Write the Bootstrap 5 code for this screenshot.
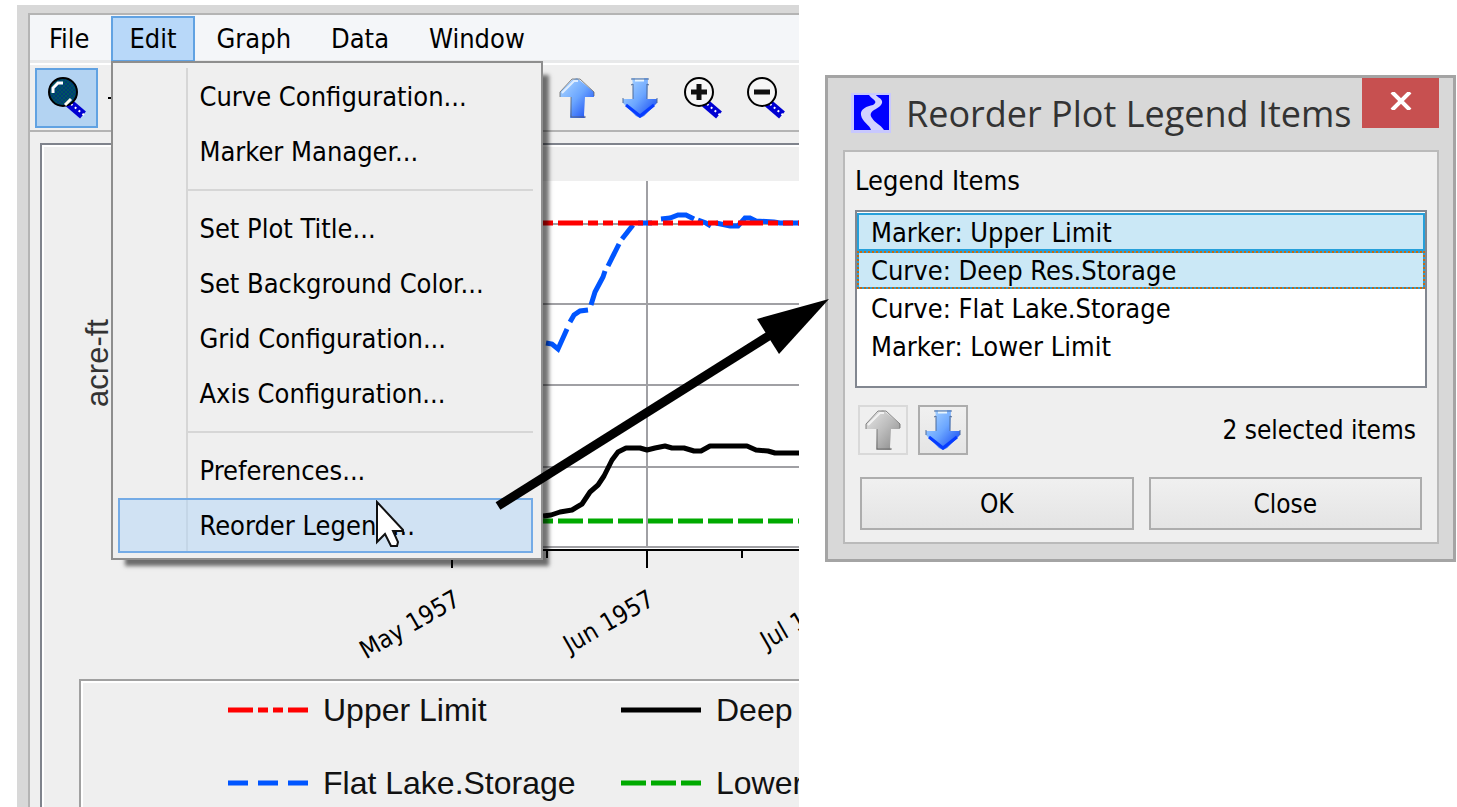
<!DOCTYPE html>
<html lang="en">
<head>
<meta charset="utf-8">
<meta name="viewport" content="width=device-width, initial-scale=1">
<title>Reorder Plot Legend Items</title>
<link href="https://cdn.jsdelivr.net/npm/bootstrap@5.3.0/dist/css/bootstrap.min.css" rel="stylesheet">
<style>
  :root { --ui: "DejaVu Sans Condensed", "DejaVu Sans", sans-serif; --face: #efefef; --frame: #d8d8d8; --line: #b4b4b4; }
  body { font: 27px/32px var(--ui); color: #000; background: #fff; }
  .stage { display: grid; grid-template-columns: minmax(0, 782fr) minmax(0, 631fr); min-height: 100vh; padding: 5px 1px 0 17px; gap: 26px; overflow: hidden; }
  .plot-window { height: calc(100vh - 5px); padding: 8px 0 0 11px; background: var(--frame); overflow: hidden; }
  .plot-inner { border: solid var(--line); border-width: 2px 0 0 2px; background: var(--face); min-height: 100%; }
  .menu-strip { height: 50px; background: #f4f6f9; border-bottom: 2px solid #fff; padding-left: 1px; gap: 4px; box-shadow: inset 0 -3px #e8e9ea; }
  .menu-btn { height: 46px; margin-top: 1px; padding: 0 16px; border: 2px solid transparent; border-radius: 0; background: none; color: #000; }
  .menu-btn.open { background: #b8d8f9; border-color: #61a2e2; }
  .menu-pop { position: absolute; z-index: 5; top: 46px; left: 0; width: 432px; padding: 6px 8px 5px 5px; background: var(--face) linear-gradient(#d6d6d6, #d6d6d6) 73px 5px / 2px calc(100% - 10px) no-repeat; border: 2px solid #8e8e8e; box-shadow: 10px 10px 4px -4px rgba(0,0,0,.55); }
  .menu-entry { display: block; width: 100%; height: 55px; padding: 0 0 0 79px; border: 2px solid transparent; border-radius: 0; background: none; text-align: left; color: #000; }
  .menu-entry.hot { background: rgba(178,214,248,.5); border-color: #74abe6; }
  .menu-sep { height: 2px; margin: 10px 0 10px 70px; border: 0; background: #d6d6d6; opacity: 1; }
  .tool-strip { height: 67px; padding: 3px 0 2px 5px; border-bottom: 2px solid var(--line); }
  .tool-btn { flex: none; width: 63px; height: 60px; padding: 0; border: 2px solid transparent; border-radius: 0; background: none; }
  .tool-btn svg { vertical-align: middle; }
  .tool-btn.on { background: #b3d3f2; border-color: #61a2e2; }
  .tool-gap { width: 384px; }
  .plot-frame { margin: 11px 0 0 10px; border: solid #7f838c; border-width: 2px 0 0 2px; box-shadow: inset 2px 2px #fff; padding: 2px 0 0 2px; }
  .legend-box { margin-left: 35px; height: 140px; border: solid #a0a0a0; border-width: 2px 0 0 2px; box-shadow: inset 2px 2px #fff; padding: 9px 0 0 147px; display: grid; grid-template-columns: 378px 378px; grid-template-rows: 40px 40px; gap: 33px 15px; font: 32px/40px "Liberation Sans", sans-serif; color: #111; }
  .legend-box > div { gap: 15px; }
  .legend-box svg { flex: none; }
  .dlg { margin-top: 70px; background: var(--frame); border: 3px solid #a4a4a4; padding: 0 14px 15px 15px; }
  .dlg-head { height: 72px; padding-left: 8px; }
  .dlg-head > svg { margin-top: 15px; }
  .dlg-title { font: 36px/48px "Open Sans", sans-serif; color: #333; padding-top: 12px; margin-left: 15px; white-space: nowrap; }
  .close-x { width: 77px; height: 50px; border: 0; border-radius: 0; padding: 0 0 4px; background: #c75050; }
  .dlg-panel { background: var(--face); border: 2px solid #bababa; padding: 13px 10px 12px; }
  .list-frame { height: 178px; margin: 13px 0 17px; background: #fff; border: 2px solid #828790; padding: 1px 0 0; border-radius: 0; list-style: none; }
  .list-row { height: 38px; padding: 1px 12px; line-height: 34px; border: 2px solid transparent; }
  .list-row.picked { background: #cbe8f6; border-color: #26a0da; }
  .list-row.focused { outline: 2px dotted #c86810; outline-offset: -2px; }
  .tools-row { padding: 0 11px 0 3px; gap: 10px; margin-bottom: 22px; font-size: 26px; }
  .arrow-btn { width: 50px; height: 50px; padding: 0; border: 2px solid #adadad; border-radius: 0; background: linear-gradient(#f0f0f0, #e5e5e5); }
  .arrow-btn svg { display: block; margin: auto; }
  .arrow-btn:disabled { border-color: #d9d9d9; background: var(--face); }
  .answer-row { padding: 0 5px; gap: 15px; }
  .dlg-btn { height: 53px; padding: 0; border: 2px solid #adadad; border-radius: 0; background: linear-gradient(#f0f0f0, #e4e4e4); font-size: 26px; color: #000; }
  .pointer { position: absolute; z-index: 6; left: 376px; top: 500px; }
  .callout { position: absolute; z-index: 7; left: 490px; top: 290px; pointer-events: none; }
</style>
</head>
<body>
<svg width="0" height="0" class="position-absolute" aria-hidden="true">
  <defs>
    <linearGradient id="blueUp" x1="0" y1="0" x2="1" y2="1"><stop offset="0" stop-color="#b4dcff"/><stop offset=".5" stop-color="#6ba6ff"/><stop offset="1" stop-color="#0b3cf0"/></linearGradient>
    <linearGradient id="greyUp" x1="0" y1="0" x2="1" y2="1"><stop offset="0" stop-color="#e8e8e8"/><stop offset=".5" stop-color="#bcbcbc"/><stop offset="1" stop-color="#858585"/></linearGradient>
    <pattern id="lensDots" width="4" height="4" patternUnits="userSpaceOnUse"><rect width="4" height="4" fill="#003a78"/><path d="M0 0h2v2h-2zM2 2h2v2h-2z" fill="#00555e"/></pattern>
    <symbol id="up" viewBox="0 0 36 42"><path d="M18 1 35 15v5h-9l-1 18 1 3H11l1-21H1v-5L13 3z"/><path d="M3 16 15 4h4" fill="none" stroke="#fff" stroke-width="2" opacity=".7"/><path d="M1 20v-5L13 2h8L35 15v4M12 20v20h15" fill="none" stroke="#555" stroke-width="1" opacity=".7"/></symbol>
    <symbol id="down" viewBox="0 0 36 42"><path d="M10 1h16l-1 21h10v4L22 39l-4 2-4-2L1 26v-4h10V8z" fill="url(#blueUp)"/><path d="M13 3h9" stroke="#e8f6ff" stroke-width="3"/><path d="M9 2h18M9 8l2-1v15M27 8l-2-1v15M1 21v5M35 21v5" fill="none" stroke="#4d6b99" stroke-width="1"/><path d="M4 28 18 39 32 28" fill="none" stroke="#073cff" stroke-width="3"/></symbol>
    <symbol id="handle" viewBox="0 0 40 42"><path d="M22 26 36 38" stroke="#0000d2" stroke-width="9"/><path d="M24 27 37 38" stroke="#fff" stroke-width="2" stroke-dasharray="2 3"/></symbol>
  </defs>
</svg>

<main class="stage position-relative align-items-start">
  <section class="plot-window" aria-label="Plot window">
    <div class="plot-inner">
      <nav class="menu-strip d-flex align-items-start" aria-label="Menu bar">
        <button type="button" class="menu-btn">File</button>
        <div class="position-relative">
          <button type="button" class="menu-btn open" aria-expanded="true">Edit</button>
          <div class="menu-pop" role="menu">
            <button type="button" class="menu-entry" role="menuitem">Curve Configuration...</button>
            <button type="button" class="menu-entry" role="menuitem">Marker Manager...</button>
            <hr class="menu-sep">
            <button type="button" class="menu-entry" role="menuitem">Set Plot Title...</button>
            <button type="button" class="menu-entry" role="menuitem">Set Background Color...</button>
            <button type="button" class="menu-entry" role="menuitem">Grid Configuration...</button>
            <button type="button" class="menu-entry" role="menuitem">Axis Configuration...</button>
            <hr class="menu-sep">
            <button type="button" class="menu-entry" role="menuitem">Preferences...</button>
            <button type="button" class="menu-entry hot" role="menuitem">Reorder Legend...</button>
          </div>
        </div>
        <button type="button" class="menu-btn">Graph</button>
        <button type="button" class="menu-btn">Data</button>
        <button type="button" class="menu-btn">Window</button>
      </nav>

      <div class="tool-strip d-flex" role="toolbar" aria-label="Plot tools">
        <button type="button" class="tool-btn on" aria-label="Zoom">
          <svg width="40" height="42" viewBox="0 0 40 42"><use href="#handle"/><circle cx="16" cy="15" r="14" fill="url(#lensDots)" stroke="#000" stroke-width="2"/><path d="M6 16v-5l5-5h5" fill="none" stroke="#fff" stroke-width="3"/><path d="m18 28 6-6" stroke="#ffe" stroke-width="3"/></svg>
        </button>
        <button type="button" class="tool-btn" aria-label="Pan">
          <svg width="44" height="44" viewBox="0 0 44 44"><path d="M0 22h44M22 0v44" stroke="#000" stroke-width="2"/></svg>
        </button>
        <span class="tool-gap flex-shrink-0"></span>
        <button type="button" class="tool-btn" aria-label="Move up"><svg width="36" height="42" fill="url(#blueUp)"><use href="#up"/></svg></button>
        <button type="button" class="tool-btn" aria-label="Move down"><svg width="36" height="42"><use href="#down"/></svg></button>
        <button type="button" class="tool-btn" aria-label="Zoom in">
          <svg width="40" height="42" viewBox="0 0 40 42"><use href="#handle"/><circle cx="16" cy="15" r="14" fill="#f6f6f6" stroke="#000" stroke-width="2"/><path d="M8 15h16M16 7v16" stroke="#111" stroke-width="5"/></svg>
        </button>
        <button type="button" class="tool-btn" aria-label="Zoom out">
          <svg width="40" height="42" viewBox="0 0 40 42"><use href="#handle"/><circle cx="16" cy="15" r="14" fill="#f6f6f6" stroke="#000" stroke-width="2"/><path d="M8 15h16" stroke="#111" stroke-width="5"/></svg>
        </button>
      </div>

      <div class="plot-frame">
        <svg class="d-block" width="755" height="532" viewBox="44 147 755 532" role="img" aria-label="Reservoir storage in acre-feet by month">
          <rect x="190" y="181" width="620" height="368" fill="#fff"/>
          <g stroke="#a0a0a4" stroke-width="2">
            <path d="M190 224H810M190 304H810M190 385H810M190 467H810M190 547H810"/><path d="M647 181V548"/>
          </g>
          <path d="M190 550H810" stroke="#000" stroke-width="2"/>
          <path d="M452 550v18M647 550v18M547 550v8M742 550v8" stroke="#000" stroke-width="2"/>
          <path d="M498 521H799" stroke="#00aa00" stroke-width="5" stroke-dasharray="25 5"/>
          <path d="M543 516 551 515 560 512 572 510 582 504 590 492 598 485 604 476 612 460 618 452 626 448H640L647 450 655 448 665 446 672 448H684L694 451H701L710 446H747L756 450 768 451 775 453H799" fill="none" stroke="#000" stroke-width="5" stroke-linejoin="round"/>
          <g fill="none" stroke="#0055ff" stroke-width="5">
            <path d="M546 343 552 344 558 349 567 329"/>
            <path d="M570 322 574 315 580 311 588 310"/>
            <path d="M591 305 595 292 603 277 605 271"/>
            <path d="M608 266 619 244"/>
            <path d="M622 239 633 225"/>
            <path d="M638 223H652"/>
            <path d="M661 219 670 218 678 215H686L694 219"/>
            <path d="M698 220 706 223 711 226"/>
            <path d="M716 223 730 226H738L745 218H750L756 221 774 222 780 223H799"/>
          </g>
          <path d="M498 223H799" stroke="#ff0000" stroke-width="5" stroke-dasharray="25 5 10 5 10 5"/>
          <g font-size="25" fill="#000" text-anchor="end">
            <text transform="translate(462 604) rotate(-30)">May 1957</text>
            <text transform="translate(656 604) rotate(-30)">Jun 1957</text>
            <text transform="translate(846 604) rotate(-30)">Jul 1957</text>
          </g>
          <text transform="translate(108 363) rotate(-90)" text-anchor="middle" font-size="31" fill="#333" font-family="Liberation Sans, sans-serif">acre-ft</text>
        </svg>
        <div class="legend-box">
          <div class="d-flex align-items-center text-nowrap"><svg width="80" height="6"><path d="M0 3H80" stroke="#f00" stroke-width="5" stroke-dasharray="25 5 10 5 10 5"/></svg><span>Upper Limit</span></div>
          <div class="d-flex align-items-center text-nowrap"><svg width="80" height="6"><path d="M0 3H80" stroke="#000" stroke-width="5"/></svg><span>Deep Res.Storage</span></div>
          <div class="d-flex align-items-center text-nowrap"><svg width="80" height="6"><path d="M0 3H80" stroke="#0055ff" stroke-width="5" stroke-dasharray="20 10"/></svg><span>Flat Lake.Storage</span></div>
          <div class="d-flex align-items-center text-nowrap"><svg width="80" height="6"><path d="M0 3H80" stroke="#0a0" stroke-width="5" stroke-dasharray="25 5"/></svg><span>Lower Limit</span></div>
        </div>
      </div>
    </div>
  </section>

  <section class="dlg" role="dialog" aria-labelledby="dlgTitle">
    <header class="dlg-head d-flex align-items-start">
      <svg class="flex-shrink-0" width="40" height="40" viewBox="0 0 40 40"><path d="M0 0h40v40H0z" fill="#c8c8ff"/><path d="M3 2h35v35H3z" fill="#0000ff"/><path d="M18 2h7c1 2 5 3 6 6 1 4-4 7-8 9-4 3-4 5-2 8 3 5 8 6 12 12H20c-1-5-9-8-10-15-1-6 6-9 12-10 2-1 3-3 2-4-1-2-4-3-6-6z" fill="#d2d2ff"/></svg>
      <h1 class="dlg-title mb-0" id="dlgTitle">Reorder Plot Legend Items</h1>
      <button type="button" class="close-x ms-auto flex-shrink-0" aria-label="Close window">
        <svg class="d-block mx-auto" width="22" height="18" viewBox="0 0 22 18"><path d="M2 0 20 18M20 0 2 18" stroke="#fff" stroke-width="4"/></svg>
      </button>
    </header>
    <div class="dlg-panel">
      <div id="listLabel">Legend Items</div>
      <ul class="list-frame" role="listbox" aria-multiselectable="true" aria-labelledby="listLabel">
        <li class="list-row picked" role="option" aria-selected="true">Marker: Upper Limit</li>
        <li class="list-row picked focused" role="option" aria-selected="true">Curve: Deep Res.Storage</li>
        <li class="list-row" role="option">Curve: Flat Lake.Storage</li>
        <li class="list-row" role="option">Marker: Lower Limit</li>
      </ul>
      <div class="tools-row d-flex align-items-center">
        <button type="button" class="arrow-btn" aria-label="Move item up" disabled><svg width="36" height="42" fill="url(#greyUp)"><use href="#up"/></svg></button>
        <button type="button" class="arrow-btn" aria-label="Move item down"><svg width="36" height="42"><use href="#down"/></svg></button>
        <span class="ms-auto">2 selected items</span>
      </div>
      <div class="answer-row d-flex">
        <button type="button" class="dlg-btn w-50">OK</button>
        <button type="button" class="dlg-btn w-50">Close</button>
      </div>
    </div>
  </section>

  <svg class="pointer" width="28" height="48" viewBox="0 0 28 48"><path d="M1 2v40l8-8 6 12h6l1-4-5-11h11z" fill="#fff" stroke="#111" stroke-width="2"/></svg>
  <svg class="callout" width="342" height="224" viewBox="490 290 342 224"><path d="M498 506 775 332" stroke="#000" stroke-width="9"/><path d="M829 299 757 319 779 354z"/></svg>
</main>
<script src="https://cdn.jsdelivr.net/npm/bootstrap@5.3.0/dist/js/bootstrap.bundle.min.js"></script>
</body>
</html>
